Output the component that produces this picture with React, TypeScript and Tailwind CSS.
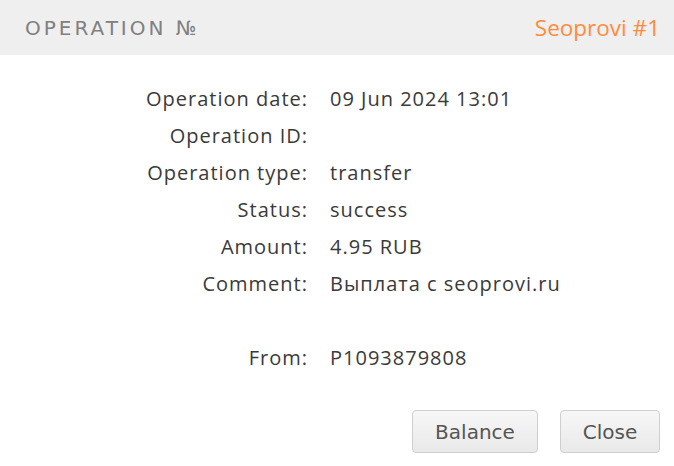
import React from 'react';

const rows: [string, string][] = [
  ['Operation date:', '09 Jun 2024 13:01'],
  ['Operation ID:', ''],
  ['Operation type:', 'transfer'],
  ['Status:', 'success'],
  ['Amount:', '4.95 RUB'],
  ['Comment:', 'Выплата с seoprovi.ru'],
  ['', ''],
  ['From:', 'P1093879808'],
];

const App: React.FC = () => {
  return (
    <div className="w-[674px] h-[466px] bg-white overflow-hidden font-['Open_Sans',sans-serif]">
      <div className="h-[55px] bg-[#efefef] flex items-center justify-between pl-[25px] pr-[14px]">
        <span className="text-[20px] tracking-[3px] text-[#808080] font-['DejaVu_Sans',sans-serif]">
          OPERATION №
        </span>
        <span className="text-[22.5px] text-[#ff8c3a]">Seoprovi #1</span>
      </div>

      <div className="grid grid-cols-[307px_1fr] gap-x-[23px] pt-[25px] text-[20px] tracking-[1px] text-[#3a3a3a]">
        {rows.map(([label, value], i) => (
          <React.Fragment key={i}>
            <div className="text-right h-[37px] leading-[37px] mr-[-1px]">{label}</div>
            <div className="h-[37px] leading-[37px]">{value}</div>
          </React.Fragment>
        ))}
      </div>

      <div className="flex justify-end gap-[22px] pr-[14px] pt-[34px] font-['DejaVu_Sans',sans-serif]">
        <button className="h-[43px] w-[126px] rounded-[4px] border border-[#cfcfcf] bg-gradient-to-b from-[#f7f7f7] to-[#e9e9e9] text-[20px] text-[#555]">
          Balance
        </button>
        <button className="h-[43px] w-[100px] rounded-[4px] border border-[#cfcfcf] bg-gradient-to-b from-[#f7f7f7] to-[#e9e9e9] text-[20px] text-[#555]">
          Close
        </button>
      </div>
    </div>
  );
};

export default App;
